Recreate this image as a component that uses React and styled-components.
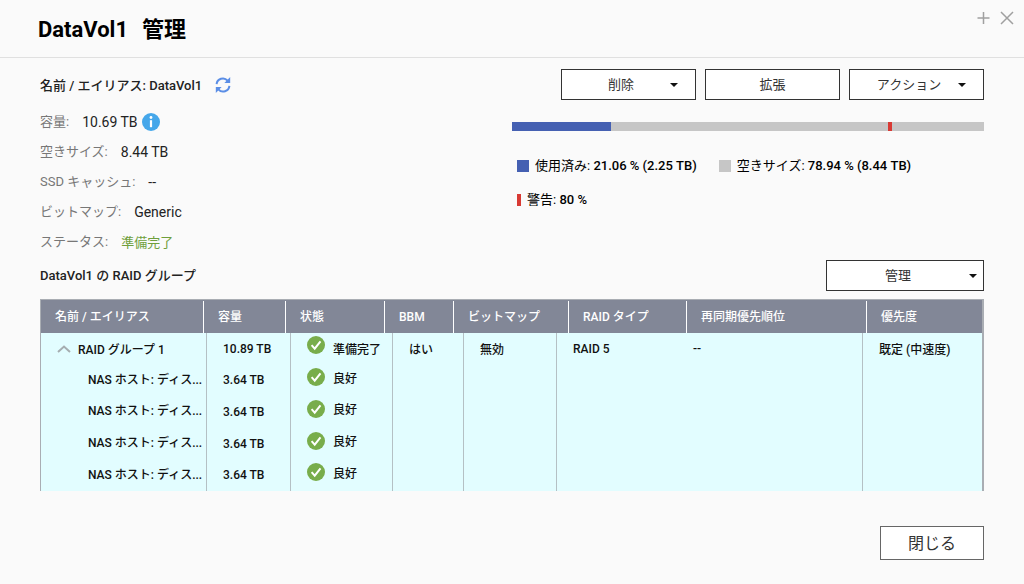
import React from 'react';
import styled, { createGlobalStyle, css } from 'styled-components';

const GlobalStyle = createGlobalStyle`
    * {
        box-sizing: border-box;
    }

    body {
        margin: 0;
        background: #fafafa;
        color: #222;
        font-family: Roboto, "Noto Sans CJK JP", sans-serif;
        font-size: 13px;
    }
`

const HEAD_COLUMNS = [162, 82, 99, 69, 115, 118, 180, 116];
const BODY_COLUMNS = [165, 84, 102, 71, 93, 121, 185, 120];

const tracks = (columns) => columns.map((size) => `minmax(0, ${size}fr)`).join(' ');

const Dialog = styled.main`
    padding-bottom: 24px;
`

const Header = styled.header`
    display: flex;
    justify-content: space-between;
    align-items: flex-start;
    height: 58px;
    padding: 10px 9px 0 38px;
    border-bottom: 1px solid #e0e0e0;
`

const Title = styled.h1`
    display: flex;
    gap: 14px;
    margin: 0;
    color: #000;
    font-size: 22px;
    font-weight: 700;
    line-height: 40px;
`

const WindowButtons = styled.div`
    display: flex;
    gap: 8px;
`

const IconButton = styled.button`
    display: flex;
    padding: 0;
    border: 0;
    background: none;
    color: #a0a0a0;
    cursor: pointer;
`

const Content = styled.div`
    padding: 11px 40px 0;
`

const Summary = styled.section`
    display: grid;
    grid-template-columns: 1fr 1fr;
`

const NameRow = styled.div`
    display: flex;
    align-items: center;
    gap: 13px;
    height: 31px;
    margin-bottom: 7px;
    font-weight: 500;
`

const InfoList = styled.dl`
    margin: 0;
`

const InfoRow = styled.div`
    display: flex;
    align-items: center;
    gap: 13px;
    height: 30px;
`

const InfoLabel = styled.dt`
    padding-bottom: 3px;
    color: #777;
    font-size: 13px;
`

const InfoValue = styled.dd`
    display: flex;
    align-items: center;
    gap: 4px;
    margin: 0;
    color: ${(props) => (props.$ready ? '#6f9f3c' : '#222')};
    font-size: ${(props) => (props.$ready ? '13px' : '14px')};
    padding-bottom: ${(props) => (props.$ready ? '2px' : '0')};
`

const Toolbar = styled.div`
    display: flex;
    justify-content: flex-end;
    gap: 9px;
`

const Button = styled.button`
    display: flex;
    align-items: center;
    width: 135px;
    height: 31px;
    padding: 0;
    border: 1px solid #333;
    background: #fff;
    color: #333;
    font: inherit;
    cursor: pointer;

    ${(props) => props.$menu && css`
        padding: 0 17px 0 10px;
    `}

    ${(props) => props.$wide && css`
        width: 158px;
        padding: 0 6px 0 0;
    `}
`

const ButtonText = styled.span`
    flex: 1;
    padding-bottom: 2px;
    text-align: center;
`

const Caret = styled.span`
    border: solid transparent;
    border-width: 4px 4px 0;
    border-top-color: #111;
`

const UsageBar = styled.div`
    position: relative;
    height: 9px;
    margin: 22px 0 25px;
    background: #c6c6c6;
`

const Used = styled.div`
    height: 100%;
    background: #4560b2;
`

const Threshold = styled.div`
    position: absolute;
    top: 0;
    width: 4px;
    height: 100%;
    margin-left: -2px;
    background: #d83a34;
`

const Legend = styled.ul`
    display: flex;
    flex-wrap: wrap;
    gap: 14px 22px;
    margin: 0;
    padding: 0 0 0 5px;
    list-style: none;
`

const LegendItem = styled.li`
    display: flex;
    align-items: center;
    gap: 6px;
    color: #000;
    font-size: 13px;
    line-height: 20px;

    &:last-child {
        width: 100%;
    }
`

const LegendValue = styled.span`
    font-weight: 500;
`

const Swatch = styled.span`
    width: ${(props) => (props.$narrow ? '4px' : '12px')};
    height: 12px;
    background: ${(props) => props.$color};
`

const GroupBar = styled.div`
    display: flex;
    justify-content: space-between;
    align-items: center;
    margin: 3px 0 8px;
`

const GroupTitle = styled.h2`
    margin: 0;
    padding-bottom: 2px;
    font-size: 13px;
    font-weight: 500;
`

const Table = styled.table`
    display: block;
    border: solid #a9adb3;
    border-width: 1px 2px 0 1px;
    font-size: 12px;
    font-weight: 500;
`

const TableHead = styled.thead`
    display: block;
    padding-top: 1px;
    background: #828797;
`

const HeadRow = styled.tr`
    display: grid;
    grid-template-columns: ${tracks(HEAD_COLUMNS)};
`

const HeadCell = styled.th`
    height: 32px;
    padding: 0 0 0 14px;
    color: #fff;
    font-weight: 500;
    line-height: 32px;
    text-align: left;
    white-space: nowrap;

    & + & {
        border-left: 1px solid #fff;
    }
`

const TableBody = styled.tbody`
    display: grid;
    grid-auto-rows: 1fr;
    min-height: 158px;
    background: #e2fdff;
    color: #111;
`

const BodyRow = styled.tr`
    display: grid;
    grid-template-columns: ${tracks(BODY_COLUMNS)};
`

const Cell = styled.td`
    display: flex;
    align-items: center;
    padding: 0 0 0 16px;
    white-space: nowrap;
    border-left: ${(props) => (props.$open ? '0' : '1px solid #b4c0c4')};
`

const NameCell = styled(Cell)`
    gap: 7px;
    padding: ${(props) => (props.$child ? '0 0 4px 47px' : '0 0 0 16px')};
    border-left: 0;
`

const StatusCell = styled(Cell)`
    gap: 8px;
    padding-bottom: ${(props) => (props.$child ? '6px' : '0')};

    svg {
        margin-bottom: ${(props) => (props.$child ? '0' : '8px')};
    }
`

const Footer = styled.footer`
    display: flex;
    justify-content: flex-end;
    margin-top: 35px;
`

const CloseButton = styled(Button)`
    width: 104px;
    height: 34px;
    border-color: #666;
    font-size: 16px;
`

const RefreshIcon = () => (
    <svg width="16" height="16" viewBox="0 0 16 16" fill="none" stroke="#5b8ee6" strokeWidth="2">
        <path d="M1.6 7.2A6.3 6.3 0 0 1 12.6 3.6" />
        <path d="M14.4 8.8A6.3 6.3 0 0 1 3.4 12.4" />
        <path d="M15.2 0v6H9.4z" fill="#5b8ee6" stroke="none" />
        <path d="M.8 16v-6h5.8z" fill="#5b8ee6" stroke="none" />
    </svg>
);

const InfoIcon = () => (
    <svg width="18" height="18" viewBox="0 0 18 18">
        <circle cx="9" cy="9" r="9" fill="#45a7ea" />
        <circle cx="9" cy="4.5" r="1.4" fill="#fff" />
        <path d="M7.9 7.2h2.2v7H7.9z" fill="#fff" />
    </svg>
);

const CheckIcon = () => (
    <svg width="18" height="18" viewBox="0 0 18 18">
        <circle cx="9" cy="9" r="9" fill="#78ad4b" />
        <path d="M4.6 9.2l3.1 3.4 5.8-7.2" fill="none" stroke="#fff" strokeWidth="2" />
    </svg>
);

const CollapseIcon = () => (
    <svg width="14" height="8" viewBox="0 0 14 8" fill="none" stroke="#a5adb0" strokeWidth="2">
        <path d="M1 7l6-5.4L13 7" />
    </svg>
);

const INFO = [
    { label: '容量:', value: '10.69 TB', info: true },
    { label: '空きサイズ:', value: '8.44 TB' },
    { label: 'SSD キャッシュ:', value: '--' },
    { label: 'ビットマップ:', value: 'Generic' },
    { label: 'ステータス:', value: '準備完了', ready: true },
];

const HEADINGS = ['名前 / エイリアス', '容量', '状態', 'BBM', 'ビットマップ', 'RAID タイプ', '再同期優先順位', '優先度'];

const DISKS = [1, 2, 3, 4];

const App = () => {
    const used = 21.06;
    const threshold = 80;

    return (
        <Dialog>
            <GlobalStyle />
            <Header>
                <Title><span>DataVol1</span><span>管理</span></Title>
                <WindowButtons>
                    <IconButton type="button" aria-label="最大化">
                        <svg width="16" height="16" viewBox="0 0 16 16" stroke="currentColor" strokeWidth="1.5">
                            <path d="M8.5 2v12M2.5 8h12" />
                        </svg>
                    </IconButton>
                    <IconButton type="button" aria-label="閉じる">
                        <svg width="16" height="16" viewBox="0 0 16 16" stroke="currentColor" strokeWidth="1.5">
                            <path d="M2 2l12 12M14 2L2 14" />
                        </svg>
                    </IconButton>
                </WindowButtons>
            </Header>
            <Content>
                <Summary>
                    <div>
                        <NameRow>
                            <span>名前 / エイリアス: DataVol1</span>
                            <IconButton type="button" aria-label="更新"><RefreshIcon /></IconButton>
                        </NameRow>
                        <InfoList>
                            {INFO.map((item) => (
                                <InfoRow key={item.label}>
                                    <InfoLabel>{item.label}</InfoLabel>
                                    <InfoValue $ready={item.ready}>
                                        {item.value}
                                        {item.info && <InfoIcon />}
                                    </InfoValue>
                                </InfoRow>
                            ))}
                        </InfoList>
                    </div>
                    <div>
                        <Toolbar>
                            <Button type="button" aria-haspopup="menu" $menu><ButtonText>削除</ButtonText><Caret /></Button>
                            <Button type="button"><ButtonText>拡張</ButtonText></Button>
                            <Button type="button" aria-haspopup="menu" $menu><ButtonText>アクション</ButtonText><Caret /></Button>
                        </Toolbar>
                        <UsageBar>
                            <Used style={{ width: `${used}%` }} />
                            <Threshold style={{ left: `${threshold}%` }} />
                        </UsageBar>
                        <Legend>
                            <LegendItem>
                                <Swatch $color="#4560b2" />
                                <span>使用済み: <LegendValue>21.06 % (2.25 TB)</LegendValue></span>
                            </LegendItem>
                            <LegendItem>
                                <Swatch $color="#c6c6c6" />
                                <span>空きサイズ: <LegendValue>78.94 % (8.44 TB)</LegendValue></span>
                            </LegendItem>
                            <LegendItem>
                                <Swatch $color="#d83a34" $narrow />
                                <span>警告: <LegendValue>80 %</LegendValue></span>
                            </LegendItem>
                        </Legend>
                    </div>
                </Summary>
                <GroupBar>
                    <GroupTitle>DataVol1 の RAID グループ</GroupTitle>
                    <Button type="button" aria-haspopup="menu" $wide><ButtonText>管理</ButtonText><Caret /></Button>
                </GroupBar>
                <Table>
                    <TableHead>
                        <HeadRow>
                            {HEADINGS.map((heading) => <HeadCell key={heading}>{heading}</HeadCell>)}
                        </HeadRow>
                    </TableHead>
                    <TableBody>
                        <BodyRow>
                            <NameCell>
                                <IconButton type="button" aria-label="折りたたむ"><CollapseIcon /></IconButton>
                                RAID グループ 1
                            </NameCell>
                            <Cell>10.89 TB</Cell>
                            <StatusCell><CheckIcon />準備完了</StatusCell>
                            <Cell>はい</Cell>
                            <Cell>無効</Cell>
                            <Cell>RAID 5</Cell>
                            <Cell $open>--</Cell>
                            <Cell>既定 (中速度)</Cell>
                        </BodyRow>
                        {DISKS.map((disk) => (
                            <BodyRow key={disk}>
                                <NameCell $child>NAS ホスト: ディス...</NameCell>
                                <Cell>3.64 TB</Cell>
                                <StatusCell $child><CheckIcon />良好</StatusCell>
                                <Cell />
                                <Cell />
                                <Cell />
                                <Cell $open />
                                <Cell />
                            </BodyRow>
                        ))}
                    </TableBody>
                </Table>
                <Footer>
                    <CloseButton type="button"><ButtonText>閉じる</ButtonText></CloseButton>
                </Footer>
            </Content>
        </Dialog>
    );
};

export default App;
